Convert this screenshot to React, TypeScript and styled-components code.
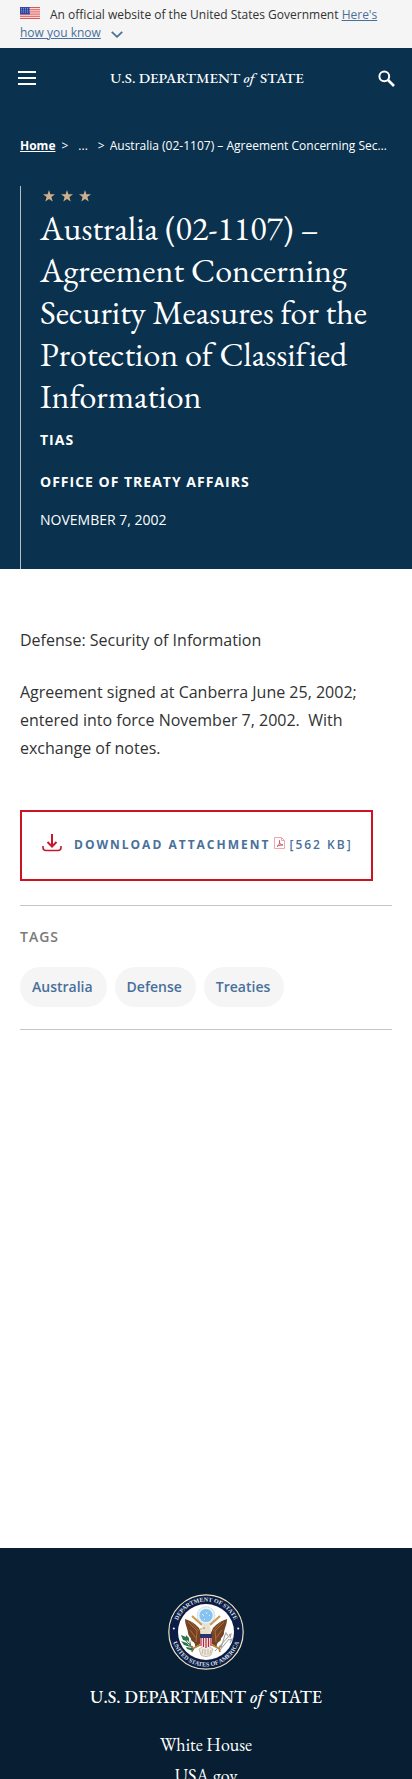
import React from "react";
import styled, { createGlobalStyle } from "styled-components";

const sans = `"Open Sans", "Noto Sans", sans-serif`;
const serif = `"EB Garamond", "Liberation Serif", serif`;

const GlobalStyle = createGlobalStyle`
  *, *::before, *::after { box-sizing: border-box; }
  html, body { margin: 0; padding: 0; }
  body { font-family: ${sans}; font-size: 16px; color: #323232; background: #fff; }
  h1, h2, p, ul, ol { margin: 0; padding: 0; }
  ul, ol { list-style: none; }
`;

const Page = styled.div`
  display: flex;
  flex-direction: column;
  height: 100vh;
  overflow-y: auto;
  scrollbar-width: none;
`;

const Banner = styled.section`
  flex: none;
  padding: 6px 20px;
  background: #f5f5f5;
  font-size: 12px;
  line-height: 18px;
`;

const Flag = styled.svg`
  width: 20px;
  height: 12px;
  margin-right: 10px;
`;

const BannerLink = styled.a`
  color: #48709b;
  text-decoration: underline;
`;

const Chevron = styled.svg`
  width: 12px;
  height: 7px;
  margin-left: 10px;
  vertical-align: -1px;
`;

const Masthead = styled.header`
  flex: none;
  display: flex;
  align-items: center;
  justify-content: space-between;
  height: 60px;
  padding: 0 17px 0 18px;
  background: #0a314d;
`;

const IconButton = styled.button`
  display: flex;
  padding: 0;
  border: 0;
  background: none;
  color: #fff;
  cursor: pointer;
`;

const Wordmark = styled.a<{ $size: number }>`
  font-family: ${serif};
  font-size: ${(p) => p.$size}px;
  font-weight: 500;
  line-height: 24px;
  color: #fff;
  text-decoration: none;
  white-space: nowrap;

  i { margin-right: 2px; }
`;

const Hero = styled.section`
  flex: none;
  padding: 28px 20px 0;
  background: #0a314d;
  color: #fff;
`;

const Crumbs = styled.ol`
  display: flex;
  font-size: 12px;
  line-height: 20px;
  white-space: nowrap;
`;

const Crumb = styled.li<{ $current?: boolean }>`
  flex: ${(p) => (p.$current ? "0 1 auto" : "none")};
  min-width: 0;
  overflow: hidden;
  text-overflow: ellipsis;

  a { color: #fff; font-weight: 700; }
`;

const Separator = styled.span<{ $before: number; $after: number }>`
  margin: 0 ${(p) => p.$after}px 0 ${(p) => p.$before}px;
`;

const HeroBody = styled.div`
  margin-top: 30px;
  padding: 4px 19px 39px;
  border-left: 1px solid #b5c0c6;
`;

const Stars = styled.svg`
  display: block;
  width: 50px;
  height: 12px;
  margin-left: 3px;
`;

const Title = styled.h1`
  margin-top: 5px;
  margin-bottom: 13px;
  font-family: ${serif};
  font-weight: 400;
  font-size: 34px;
  line-height: 42px;
  font-variant-ligatures: none;
`;

const Meta = styled.p<{ $gap: number; $bold?: boolean }>`
  margin-top: ${(p) => p.$gap}px;
  font-size: 14px;
  line-height: 20px;
  font-weight: ${(p) => (p.$bold ? 700 : 400)};
  letter-spacing: ${(p) => (p.$bold ? 1 : 0)}px;
  text-transform: uppercase;
`;

const Content = styled.main`
  flex: none;
  padding: 57px 20px 518px;
`;

const Paragraph = styled.p`
  margin-bottom: 24px;
  font-size: 16px;
  line-height: 28px;
  white-space: pre-wrap;
`;

const Download = styled.a`
  display: inline-flex;
  align-items: center;
  margin-top: 24px;
  height: 71px;
  padding: 0 18px 2px 20px;
  border: 2px solid #cb1325;
  font-size: 12px;
  line-height: 20px;
  font-weight: 700;
  letter-spacing: 2px;
  text-transform: uppercase;
  white-space: nowrap;
  color: #48709b;
  text-decoration: none;
`;

const DownloadIcon = styled.svg`
  width: 20px;
  height: 18px;
  margin: 0 12px 3px 0;
`;

const PdfIcon = styled.svg`
  width: 11px;
  height: 12px;
  margin: 0 4px 3px 4px;
`;

const FileSize = styled.span`
  font-weight: 600;
`;

const Tags = styled.section`
  margin-top: 24px;
  padding: 21px 0 22px;
  border-top: 1px solid #c6c6c6;
  border-bottom: 1px solid #c6c6c6;
`;

const TagsTitle = styled.h2`
  font-size: 14px;
  line-height: 20px;
  font-weight: 600;
  letter-spacing: 1px;
  color: #7a7a7a;
`;

const TagList = styled.ul`
  display: flex;
  flex-wrap: wrap;
  gap: 8px;
  margin-top: 20px;
`;

const Tag = styled.a`
  display: block;
  padding: 10px 14px 10px 12px;
  border-radius: 20px;
  background: #f5f5f5;
  font-size: 14px;
  line-height: 20px;
  font-weight: 600;
  color: #48709b;
  text-decoration: none;
`;

const Footer = styled.footer`
  flex: none;
  display: flex;
  flex-direction: column;
  align-items: center;
  padding: 46px 20px 48px;
  background: #081f33;
`;

const SealArt = styled.svg`
  width: 76px;
  height: 76px;
  margin-bottom: 15px;
`;

const FooterLinks = styled.ul`
  margin-top: 20px;
  text-align: center;
`;

const FooterLink = styled.a`
  font-family: ${serif};
  font-size: 18px;
  line-height: 31px;
  color: #fff;
  text-decoration: none;
`;

const STAR = "M6 0 7.4 4.2 12 4.3 8.4 7.1 9.7 11.5 6 9 2.3 11.5 3.6 7.1 0 4.3 4.6 4.2Z";

function Seal() {
  return (
    <SealArt viewBox="0 0 76 76" role="img" aria-label="Department of State seal">
      <defs>
        <path id="seal-top" d="M7.5 38a30.5 30.5 0 0 1 61 0" />
        <path id="seal-bottom" d="M3.6 38a34.4 34.4 0 0 0 68.8 0" />
      </defs>
      <circle cx="38" cy="38" r="37.2" fill="#0d1c44" stroke="#e9e3c3" strokeWidth="1.2" />
      <circle cx="38" cy="38" r="28" fill="#fff" />
      <g fill="#dfe3ea" fontFamily="Liberation Serif, serif" fontSize="6" fontWeight="700" textAnchor="middle">
        <text><textPath href="#seal-top" startOffset="50%">DEPARTMENT OF STATE</textPath></text>
        <text><textPath href="#seal-bottom" startOffset="50%">UNITED STATES OF AMERICA</textPath></text>
      </g>
      <circle cx="5.8" cy="34.5" r="1" fill="#fff" />
      <circle cx="70.2" cy="34.5" r="1" fill="#fff" />
      <circle cx="38" cy="21.5" r="8.8" fill="#e8f2fb" stroke="#a9bdcc" strokeWidth=".8" strokeDasharray="1 .6" />
      <circle cx="38" cy="21.5" r="6.6" fill="#86c2f2" />
      <path d="M34 20l2 2m2-4 1 2m2 2 1-1m-6 4 1 1" stroke="#d8ecfb" strokeWidth="1" />
      <path d="M24 22l10 9M52 22l-10 9" stroke="#c99b55" strokeWidth="2.2" />
      <path d="M17 25c4 1 10 4 14 9l3 7-2 9-5 3c1-4-2-5-4-7 1-2-3-4-3-7 0-4-3-8-3-14Z" fill="#754224" />
      <path d="M59 25c-4 1-10 4-14 9l-3 7 2 9 5 3c-1-4 2-5 4-7-1-2 3-4 3-7 0-4 3-8 3-14Z" fill="#754224" />
      <path d="M20 28l9 9-1 11M23 28l8 9M56 28l-9 9 1 11M53 28l-8 9M22 36l6 8M54 36l-6 8" stroke="#b57a42" strokeWidth=".8" fill="none" />
      <path d="M34 33c1-4 6-5 8-1l1 6-4 5h-4l-3-4Z" fill="#e8e1ce" />
      <path d="M34 34l-3 1 2 1Z" fill="#d69a2e" />
      <circle cx="36" cy="34" r=".6" fill="#302820" />
      <path d="M32 51l-8 4M44 51l8 4M25 53l-3-1m3 2-1 4M51 53l3-1m-3 2 1 4" stroke="#b88135" strokeWidth="1.7" />
      <path d="M31 55c4-3 10-3 14 0l-2 6c-3 2-7 2-10 0Z" fill="#eee9dd" stroke="#b9aa91" strokeWidth=".7" />
      <path d="M35 55l-1 5m3-5v6m3-6v6m3-5-1 4" stroke="#a9977c" strokeWidth=".6" />
      <path d="M32 42h12v9c-1 2-4 3-6 4-2-1-5-2-6-4Z" fill="#f4e8e8" />
      <path d="M33 44v8m2.5-8v9m2.5-9v10m2.5-10v9m2.5-9v8" stroke="#b5283b" strokeWidth="1.2" />
      <path d="M32 40h12v4H32Z" fill="#29366d" />
      <path d="M14 42l12 14" stroke="#4c693f" strokeWidth="1" />
      <path d="M13 41l5 2 1 4-4-1ZM18 41l3 3v4l-3-3ZM13 47l6 2 3 4-6-2ZM22 46l1 5-2 1ZM18 53l6 1 1 3-6-2Z" fill="#28764a" />
      <path d="M62 41 47 57M61 45l-9 11M57 41l-4 13" stroke="#9e9e97" strokeWidth="1" />
      <path d="M61 41l2-1-1 4M57 41l1-2 2 3M61 46l3-1-2 4" stroke="#aaa" strokeWidth="1.2" fill="none" />
    </SealArt>
  );
}

export default function App() {
  return (
    <Page>
      <GlobalStyle />
      <Banner aria-label="Official government website">
        <Flag viewBox="0 0 20 13" preserveAspectRatio="none" aria-hidden="true">
          <rect width="20" height="13" fill="#fff" />
          <path d="M0 .5h20M0 2.5h20M0 4.5h20M0 6.5h20M0 8.5h20M0 10.5h20M0 12.5h20" stroke="#dd4a4a" />
          <rect width="10" height="8" fill="#2f45a0" />
          <path d="M1 1.5h9M1 3.5h9M1 5.5h9" stroke="#8fa0da" strokeDasharray="1 1" />
        </Flag>
        An official website of the United States Government{" "}
        <BannerLink href="#">Here's how you know</BannerLink>
        <Chevron viewBox="0 0 12 7" fill="none" stroke="#48709b" strokeWidth="1.8" aria-hidden="true">
          <path d="M.8.8 6 5.8 11.2.8" />
        </Chevron>
      </Banner>

      <Masthead>
        <IconButton type="button" aria-label="Menu">
          <svg width="18" height="14" stroke="#fff" strokeWidth="2">
            <path d="M0 1h18M0 7h18M0 13h18" />
          </svg>
        </IconButton>
        <Wordmark href="#" $size={15}>U.S. DEPARTMENT <i>of</i> STATE</Wordmark>
        <IconButton type="button" aria-label="Search">
          <svg width="17" height="17" viewBox="0 0 17 17" fill="none" stroke="#fff">
            <circle cx="6.3" cy="6.3" r="4.9" strokeWidth="2" />
            <path d="m10 10 6 6" strokeWidth="2.6" />
          </svg>
        </IconButton>
      </Masthead>

      <Hero>
        <nav aria-label="Breadcrumb">
          <Crumbs>
            <Crumb><a href="#">Home</a><Separator $before={6} $after={10}>&gt;</Separator></Crumb>
            <Crumb>...<Separator $before={10} $after={5}>&gt;</Separator></Crumb>
            <Crumb $current aria-current="page">
              Australia (02-1107) – Agreement Concerning Security Measures for the Protection of Classified Information
            </Crumb>
          </Crumbs>
        </nav>
        <HeroBody>
          <Stars viewBox="0 0 50 12" fill="#cfae8c" aria-hidden="true">
            <path d={STAR} />
            <path d={STAR} transform="translate(18 0)" />
            <path d={STAR} transform="translate(36 0)" />
          </Stars>
          <Title>Australia (02-1107) – Agreement Concerning Security Measures for the Protection of Classified Information</Title>
          <Meta $gap={0} $bold>TIAS</Meta>
          <Meta $gap={22} $bold>Office of Treaty Affairs</Meta>
          <Meta $gap={18}>November 7, 2002</Meta>
        </HeroBody>
      </Hero>

      <Content>
        <Paragraph>Defense: Security of Information</Paragraph>
        <Paragraph>{"Agreement signed at Canberra June 25, 2002; entered into force November 7, 2002.\u00a0 With exchange of notes."}</Paragraph>
        <Download href="#">
          <DownloadIcon viewBox="0 0 20 18" fill="none" stroke="#c41a2c" aria-hidden="true">
            <path d="M10 0v12M5.5 8l4.5 4.5L14.5 8" strokeWidth="2" />
            <path d="M1 12v1.5q0 3 3 3h12q3 0 3-3V12" strokeWidth="1.6" />
          </DownloadIcon>
          Download Attachment
          <PdfIcon viewBox="0 0 11 12" fill="none" stroke="#eba9ad" aria-hidden="true">
            <path d="M.5.5h7l3 3v8H.5ZM7.5.5v3h3" />
            <path d="M3 9.5c2-1 3-4 2.5-6-.5 3 1 4.5 3.5 4.5-2 0-4 0-6 1.5Z" stroke="#cc5660" />
          </PdfIcon>
          <FileSize>[562 KB]</FileSize>
        </Download>
        <Tags>
          <TagsTitle>TAGS</TagsTitle>
          <TagList>
            {["Australia", "Defense", "Treaties"].map((tag) => (
              <li key={tag}><Tag href="#">{tag}</Tag></li>
            ))}
          </TagList>
        </Tags>
      </Content>

      <Footer>
        <Seal />
        <Wordmark href="#" $size={18}>U.S. DEPARTMENT <i>of</i> STATE</Wordmark>
        <FooterLinks>
          {["White House", "USA.gov"].map((label) => (
            <li key={label}><FooterLink href="#">{label}</FooterLink></li>
          ))}
        </FooterLinks>
      </Footer>
    </Page>
  );
}
